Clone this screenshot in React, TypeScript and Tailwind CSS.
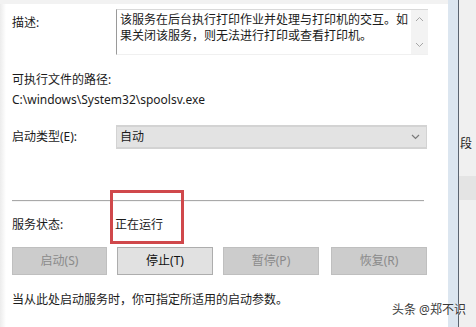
import React from 'react';

const btnBase = 'h-[28px] flex items-center justify-center border text-[12px]';

const ServiceButton: React.FC<{ label: string; enabled?: boolean; width: string }> = ({ label, enabled, width }) => (
  <div
    className={`${btnBase} ${width} ${
      enabled ? 'bg-[#e1e1e1] border-[#adadad] text-[#111]' : 'bg-[#cccccc] border-[#bfbfbf] text-[#8a8a8a]'
    }`}
  >
    {label}
  </div>
);

const App: React.FC = () => {
  return (
    <div className="relative w-[476px] h-[327px] overflow-hidden flex bg-[#f0f0f0] text-[12px] text-[#1b1b1b] font-['Noto_Sans','Noto_Sans_CJK_SC',sans-serif]">
      {/* service properties panel */}
      <div className="w-[448px] h-full flex flex-col bg-white">
        <div className="h-[4px] bg-[#f2f2f2]" />
        <div className="flex flex-1">
          <div className="w-[6px] bg-gradient-to-r from-[#ececec] to-white" />
          <div className="flex-1 pl-[6px] flex flex-col">
            {/* description */}
            <div className="flex mt-[5px]">
              <div className="w-[104px] pt-[6px] leading-[16px]">描述:</div>
              <div className="w-[312px] h-[46px] flex border-l border-t border-l-[#9a9a9a] border-t-[#d9d9d9] border-b border-b-[#f0f0f0]">
                <div className="flex-1 pl-[3px] pt-[2px] leading-[16px] whitespace-nowrap">
                  <div>该服务在后台执行打印作业并处理与打印机的交互。如</div>
                  <div>果关闭该服务，则无法进行打印或查看打印机。</div>
                </div>
                <div className="w-[17px] bg-[#f3f3f3] flex flex-col items-center justify-between py-[6px]">
                  <svg width="9" height="6" viewBox="0 0 9 6" fill="none" stroke="#a6a6a6" strokeWidth="1">
                    <polyline points="1,5 4.5,1.5 8,5" />
                  </svg>
                  <svg width="9" height="6" viewBox="0 0 9 6" fill="none" stroke="#a6a6a6" strokeWidth="1">
                    <polyline points="1,1 4.5,4.5 8,1" />
                  </svg>
                </div>
              </div>
            </div>

            {/* executable path */}
            <div className="mt-[17px] leading-[16px]">可执行文件的路径:</div>
            <div className="mt-[4px] leading-[16px] whitespace-nowrap">C:\windows\System32\spoolsv.exe</div>

            {/* startup type */}
            <div className="flex items-center mt-[17px]">
              <div className="w-[104px] leading-[16px]">启动类型(E):</div>
              <div className="w-[311px] h-[24px] flex items-center justify-between bg-[#e3e3e3] border-t-2 border-b-2 border-l border-r border-[#d3d3d3] pl-[3px] pr-[6px]">
                <span>自动</span>
                <svg width="9" height="6" viewBox="0 0 9 6" fill="none" stroke="#7a7a7a" strokeWidth="1.2">
                  <polyline points="1,1 4.5,4.5 8,1" />
                </svg>
              </div>
            </div>

            {/* separator */}
            <div className="mt-[51px] w-[412px] h-px bg-[#a9a9a9]" />
            <div className="w-[412px] h-px bg-[#f4f4f4]" />

            {/* status */}
            <div className="flex mt-[15px] leading-[16px]">
              <div className="w-[103px]">服务状态:</div>
              <div>正在运行</div>
            </div>

            {/* buttons */}
            <div className="flex mt-[14px]">
              <ServiceButton label="启动(S)" width="w-[95px]" />
              <div className="w-[10px]" />
              <ServiceButton label="停止(T)" enabled width="w-[96px]" />
              <div className="w-[10px]" />
              <ServiceButton label="暂停(P)" width="w-[96px]" />
              <div className="w-[12px]" />
              <ServiceButton label="恢复(R)" width="w-[96px]" />
            </div>

            <div className="mt-[17px] leading-[16px] whitespace-nowrap">当从此处启动服务时，你可指定所适用的启动参数。</div>
          </div>
        </div>
      </div>

      {/* window edge behind the dialog */}
      <div className="w-[10px] h-full bg-[#dce6f0]" />
      <div className="w-[1px] h-full bg-[#5b6470]" />
      <div className="flex-1 h-full flex flex-col bg-[#f0f0f0] overflow-hidden">
        <div className="h-[136px]" />
        <div className="text-[12px] leading-[16px] text-[#222] pl-[1px] whitespace-nowrap">段</div>
        <div className="h-[24px]" />
        <div className="h-[24px] bg-[#e4e4e4]" />
      </div>

      {/* red annotation box */}
      <div className="absolute left-[110px] top-[190px] w-[74px] h-[54px] border-[3px] border-[#d0484b]" />

      {/* watermark */}
      <div className="absolute left-[392px] top-[302px] text-[12px] leading-[16px] text-[#3a3a3a] whitespace-nowrap [text-shadow:0_0_2px_#fff]">
        头条 @郑不识
      </div>
    </div>
  );
};

export default App;
